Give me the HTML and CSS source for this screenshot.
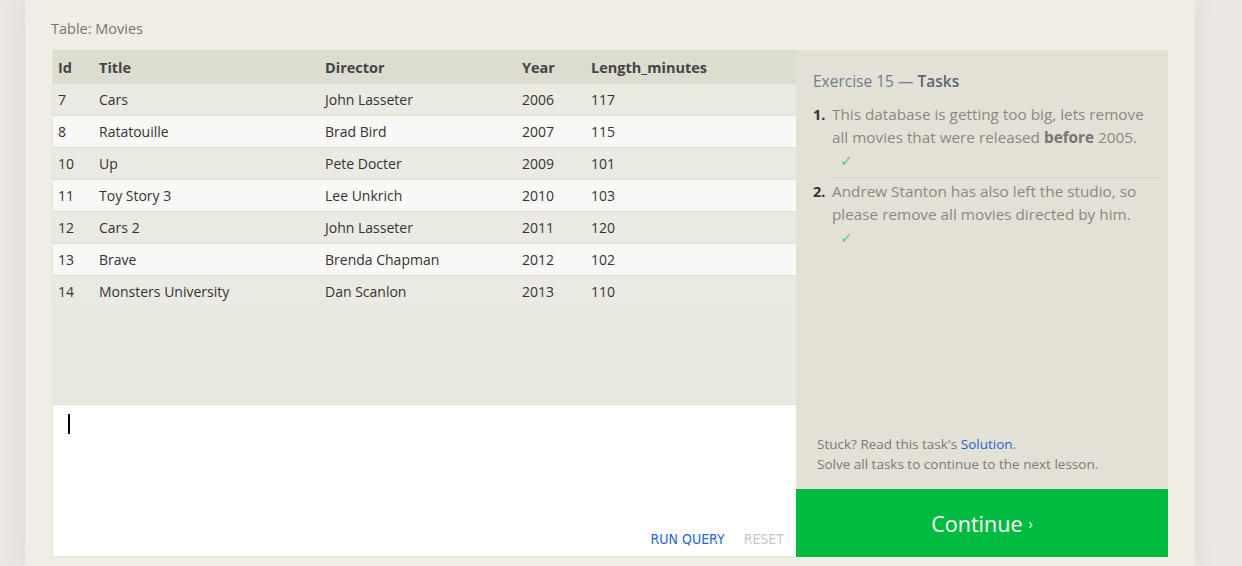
FILE: index.html
```html
<!DOCTYPE html>
<html>
<head>
<meta charset="utf-8">
<link rel="stylesheet" href="styles.css">
</head>
<body>
<div class="panel">
  <div class="table-label">Table: Movies</div>
  <div class="workspace">
    <div class="left">
      <div class="table-area">
        <table class="movies">
          <thead>
            <tr><th class="c-id">Id</th><th class="c-title">Title</th><th class="c-dir">Director</th><th class="c-year">Year</th><th>Length_minutes</th></tr>
          </thead>
          <tbody>
            <tr><td>7</td><td>Cars</td><td>John Lasseter</td><td>2006</td><td>117</td></tr>
            <tr><td>8</td><td>Ratatouille</td><td>Brad Bird</td><td>2007</td><td>115</td></tr>
            <tr><td>10</td><td>Up</td><td>Pete Docter</td><td>2009</td><td>101</td></tr>
            <tr><td>11</td><td>Toy Story 3</td><td>Lee Unkrich</td><td>2010</td><td>103</td></tr>
            <tr><td>12</td><td>Cars 2</td><td>John Lasseter</td><td>2011</td><td>120</td></tr>
            <tr><td>13</td><td>Brave</td><td>Brenda Chapman</td><td>2012</td><td>102</td></tr>
            <tr><td>14</td><td>Monsters University</td><td>Dan Scanlon</td><td>2013</td><td>110</td></tr>
          </tbody>
        </table>
      </div>
      <div class="editor">
        <div class="cursor"></div>
        <div class="editor-actions">
          <span class="run">RUN QUERY</span>
          <span class="reset">RESET</span>
        </div>
      </div>
    </div>
    <div class="right">
      <div class="tasks">
        <h2 class="tasks-title">Exercise 15 — <span class="tasks-strong">Tasks</span></h2>
        <ol class="task-list">
          <li class="task"><span class="num">1.</span><div class="task-body">This database is getting too big, lets remove all movies that were released <b>before</b> 2005.<div class="check">✓</div></div></li>
          <li class="task"><span class="num">2.</span><div class="task-body">Andrew Stanton has also left the studio, so please remove all movies directed by him.<div class="check">✓</div></div></li>
        </ol>
        <div class="stuck">
          <p>Stuck? Read this task's <span class="link">Solution</span>.</p>
          <p>Solve all tasks to continue to the next lesson.</p>
        </div>
      </div>
      <div class="continue">Continue <span class="chev">›</span></div>
    </div>
  </div>
</div>
</body>
</html>
```

FILE: styles.css
```css
html, body {
  margin: 0;
  padding: 0;
}
body {
  background: #ebe7e4;
  font-family: "Open Sans", "DejaVu Sans", sans-serif;
  height: 566px;
  overflow: hidden;
}
.panel {
  margin-left: 25px;
  width: 1116px;
  padding: 0 27px 0 27px;
  height: 566px;
  overflow: hidden;
  background: #f0ede5;
  box-shadow: 0 0 22px rgba(120, 100, 90, 0.12);
}
.table-label {
  padding-top: 18px;
  height: 50px;
  box-sizing: border-box;
  font-size: 14.5px;
  line-height: 22px;
  color: #777570;
  margin-left: -1px;
}
.workspace {
  display: grid;
  grid-template-columns: 744px 372px;
}
.left {
  display: flex;
  flex-direction: column;
}
.table-area {
  height: 354px;
  background: #eae9e1;
  box-sizing: border-box;
  border-left: 1px solid #e4e4d8;
}
.movies {
  width: 100%;
  border-collapse: collapse;
  font-size: 14px;
  color: #333;
}
.movies th {
  background: #dcdccf;
  height: 34px;
  text-align: left;
  font-weight: 700;
  color: #444;
  font-size: 14.5px;
  padding: 0 0 0 5px;
}
.movies td {
  height: 31px;
  padding: 0 0 0 5px;
  border-bottom: 1px solid #dedcd4;
}
.movies tbody tr:nth-child(odd) td {
  background: #ebeae2;
}
.movies tbody tr:nth-child(even) td {
  background: #f8f8f6;
}
.movies tbody tr:last-child td {
  border-bottom: none;
}
.c-id { width: 36px; }
.c-title { width: 221px; }
.c-dir { width: 192px; }
.c-year { width: 64px; }
.editor {
  height: 153px;
  background: #fff;
  box-sizing: border-box;
  border-left: 1px solid #e6e4dc;
  border-bottom: 1px solid #e6e4dc;
  border-top: 1px solid #e4e2d8;
  display: flex;
  flex-direction: column;
  justify-content: space-between;
  padding: 9px 12px 8px 15px;
}
.cursor {
  width: 2px;
  height: 20px;
  background: #000;
}
.editor-actions {
  display: flex;
  justify-content: flex-end;
  gap: 19px;
  font-family: "Liberation Sans Narrow", "DejaVu Sans Condensed", "Open Sans", sans-serif;
  font-size: 14px;
  line-height: 18px;
}
.run { color: #2566d8; }
.reset { color: #c8c8c8; }
.right {
  display: flex;
  flex-direction: column;
}
.tasks {
  height: 439px;
  background: #e3e1d5;
  box-sizing: border-box;
  padding: 20px 8px 0 17px;
  display: flex;
  flex-direction: column;
}
.tasks-title {
  margin: 0;
  font-size: 15.5px;
  font-weight: 400;
  color: #737c8d;
  line-height: 22px;
}
.tasks-strong {
  color: #5d6475;
  font-weight: 600;
}
.task-list {
  list-style: none;
  margin: 11px 0 0 0;
  padding: 0;
}
.task {
  display: flex;
  font-size: 15.3px;
  line-height: 23px;
  color: #8a8883;
  padding-bottom: 5px;
}
.task-body {
  max-width: 322px;
}
.task + .task {
  border-top: 1px solid #d6d4c8;
  margin-left: 19px;
  padding-top: 2px;
}
.task + .task .num {
  margin-left: -19px;
}
.num {
  width: 19px;
  flex: none;
  font-weight: 700;
  color: #333;
  font-size: 14.5px;
}
.task-body b {
  color: #777570;
}
.check {
  color: #5fcf7f;
  padding-left: 8px;
  line-height: 23px;
}
.stuck {
  margin-top: auto;
  padding: 0 0 15px 4px;
  font-size: 13.5px;
  color: #7c7a75;
  line-height: 20px;
}
.stuck p { margin: 0; }
.link { color: #1f63d8; }
.continue {
  height: 68px;
  background: #00bb40;
  color: #fff;
  font-size: 21.5px;
  display: flex;
  align-items: center;
  justify-content: center;
  gap: 6px;
}
.chev {
  font-size: 14px;
}
```
